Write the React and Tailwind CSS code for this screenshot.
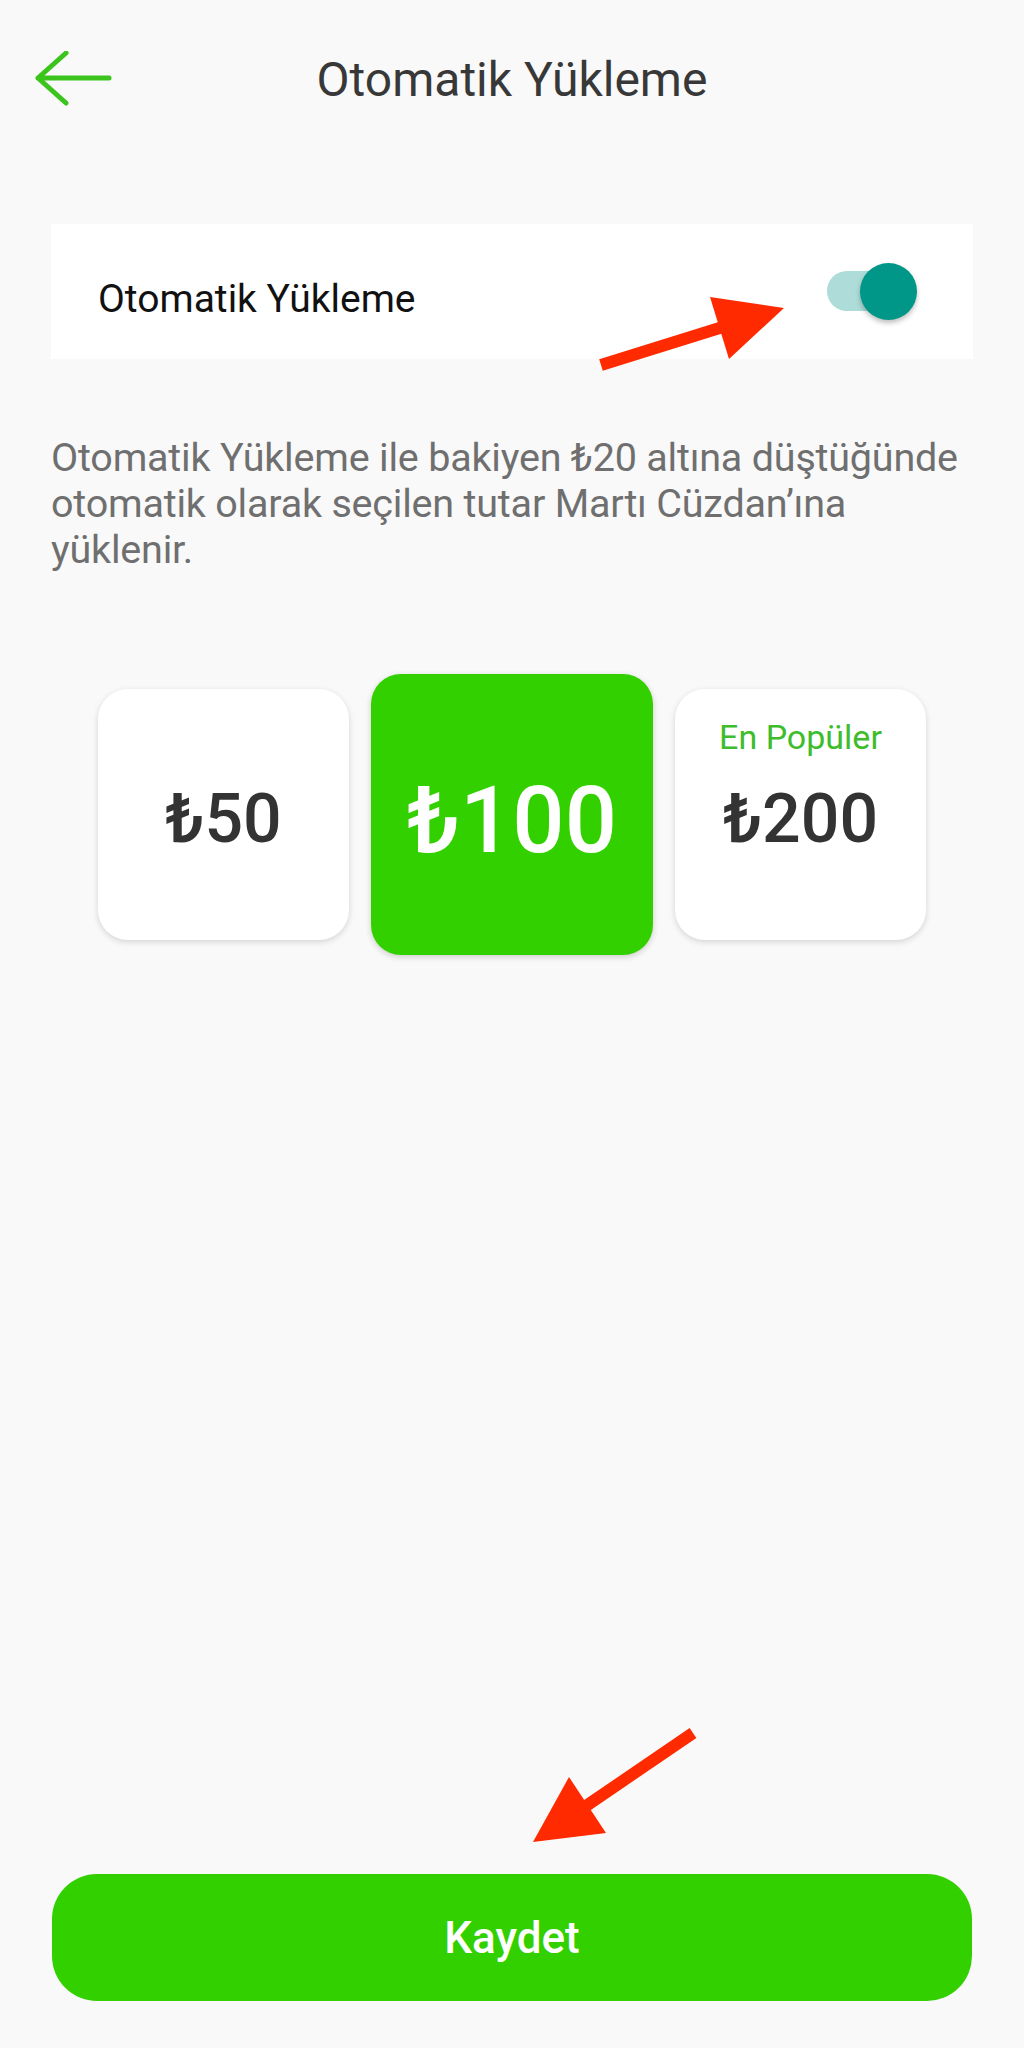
import React, { useState } from 'react';

const AMOUNTS = [50, 100, 200];

function BackArrow() {
    return (
        <svg width="80" height="60" viewBox="0 0 80 60" fill="none">
            <path
                d="M3 27 H74 M31 2 L3 27 L31 52"
                stroke="#3ac41c"
                strokeWidth="5"
                strokeLinecap="round"
                strokeLinejoin="round"
            />
        </svg>
    );
}

function Toggle({ on, onChange }) {
    return (
        <button type="button" onClick={() => onChange(!on)} className="relative w-[90px] h-[57px]">
            <span className="absolute left-0 top-[8px] w-[82px] h-[40px] rounded-full bg-[#aedcd8]" />
            <span className="absolute right-0 top-0 w-[57px] h-[57px] rounded-full bg-[#009688] shadow-[0_3px_5px_rgba(0,0,0,0.25)]" />
        </button>
    );
}

function AmountCard({ value, selected, popular, onClick }) {
    if (selected) {
        return (
            <button
                type="button"
                onClick={onClick}
                className="w-[282px] h-[281px] rounded-[30px] bg-[#33d000] shadow-[0_2px_6px_rgba(0,0,0,0.18)] flex items-center justify-center pt-[12px]"
            >
                <span className="text-[92px] leading-none font-medium text-white">₺{value}</span>
            </button>
        );
    }
    return (
        <button
            type="button"
            onClick={onClick}
            className="relative w-[251px] h-[251px] rounded-[30px] bg-white shadow-[0_2px_6px_rgba(0,0,0,0.15)] flex items-center justify-center pt-[8px]"
        >
            {popular && (
                <span className="absolute left-0 right-0 top-[29px] text-center text-[34px] leading-[38px] text-[#3dbd2b]">
                    En Popüler
                </span>
            )}
            <span className="text-[68px] leading-none font-medium text-[#333333]">₺{value}</span>
        </button>
    );
}

export default function App() {
    const [auto, setAuto] = useState(true);
    const [amount, setAmount] = useState(100);

    return (
        <div
            className="relative h-[2048px] bg-[#f9f9f9] flex flex-col"
            style={{ fontFamily: 'Roboto, "Noto Sans", "DejaVu Sans", sans-serif' }}
        >
            {/* header */}
            <div className="flex items-center mt-[52px] h-[56px]">
                <div className="w-[140px] pl-[35px] pt-[2px]">
                    <BackArrow />
                </div>
                <h1 className="flex-1 text-center text-[48px] leading-[56px] text-[#383838]">Otomatik Yükleme</h1>
                <div className="w-[140px]" />
            </div>

            {/* switch row */}
            <div className="mx-[51px] mt-[116px] h-[135px] bg-white flex items-center justify-between pl-[47px] pr-[56px]">
                <span className="pt-[14px] text-[39px] leading-[46px] text-[#111111]">Otomatik Yükleme</span>
                <Toggle on={auto} onChange={setAuto} />
            </div>

            <p className="mx-[51px] mt-[76px] whitespace-nowrap text-[39.5px] tracking-[-0.2px] leading-[46px] text-[#6f6f6f]">
                Otomatik Yükleme ile bakiyen ₺20 altına düştüğünde
                <br />
                otomatik olarak seçilen tutar Martı Cüzdan’ına
                <br />
                yüklenir.
            </p>

            <div className="mt-[101px] flex items-center justify-center gap-[22px]">
                {AMOUNTS.map((v) => (
                    <AmountCard
                        key={v}
                        value={v}
                        selected={amount === v}
                        popular={v === 200}
                        onClick={() => setAmount(v)}
                    />
                ))}
            </div>

            <div className="flex-1" />

            <button
                type="button"
                className="mx-[52px] mb-[47px] h-[127px] rounded-[45px] bg-[#33d000] text-white text-[44px] font-medium"
            >
                Kaydet
            </button>

            {/* red annotation arrows */}
            <svg className="absolute inset-0 pointer-events-none" width="1024" height="2048" viewBox="0 0 1024 2048">
                <line x1="601" y1="365" x2="726" y2="326" stroke="#ff2a00" strokeWidth="12" />
                <polygon points="710,297 784,308 729,359" fill="#ff2a00" />
                <line x1="693" y1="1733" x2="586" y2="1806" stroke="#ff2a00" strokeWidth="12" />
                <polygon points="569,1777 533,1842 606,1833" fill="#ff2a00" />
            </svg>
        </div>
    );
}
